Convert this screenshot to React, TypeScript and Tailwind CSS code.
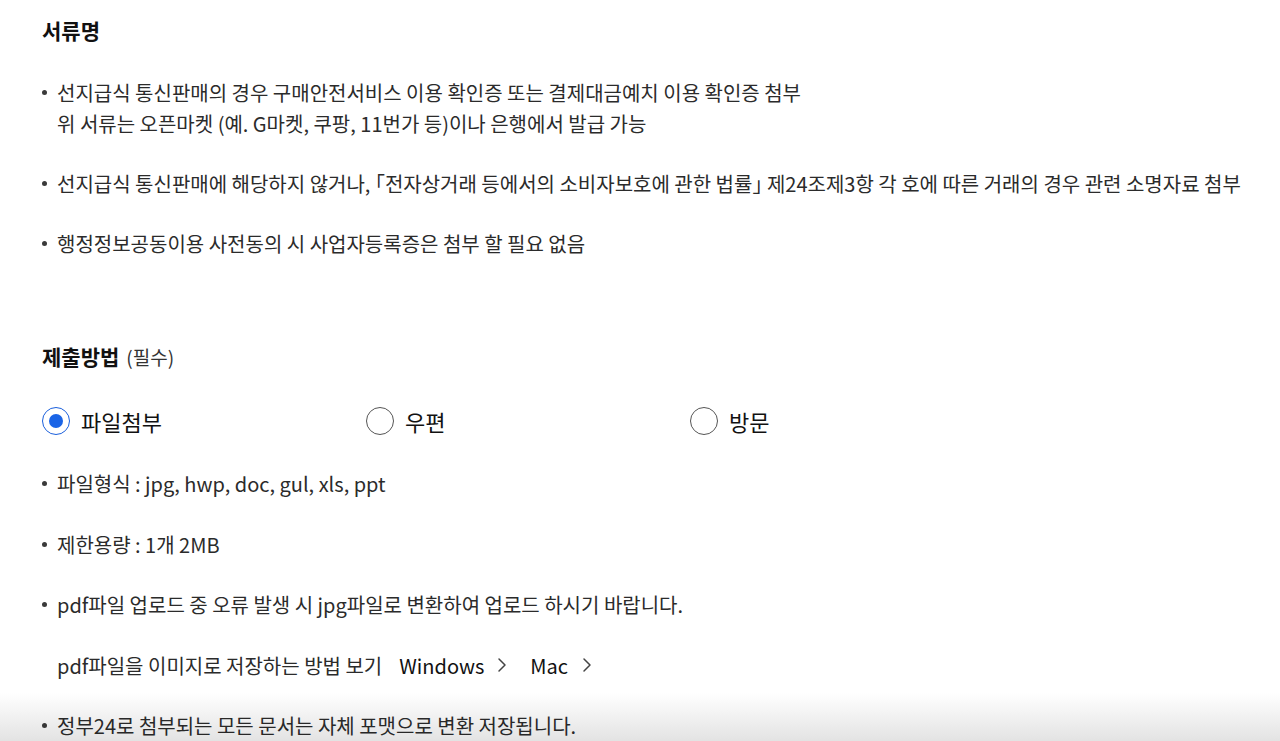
const font = { fontFamily: '"Noto Sans CJK KR", "Noto Sans", sans-serif' };

const Bullet = ({ children }: { children: React.ReactNode }) => (
    <li className="flex">
        <span className="w-[15px] shrink-0 flex pt-[13px]">
            <span className="block h-[5px] w-[5px] rounded-full bg-[#3a3a3a]"></span>
        </span>
        <div>{children}</div>
    </li>
);

const Chevron = () => (
    <svg width="10" height="16" viewBox="0 0 10 16" fill="none" stroke="#444" strokeWidth="1.5" strokeLinecap="round" strokeLinejoin="round">
        <polyline points="2,2 8,8 2,14" />
    </svg>
);

const Radio = ({ label, checked }: { label: string; checked?: boolean }) => (
    <label className="flex items-center gap-[11px] w-[324px]">
        {checked ? (
            <span className="flex h-[28px] w-[28px] items-center justify-center rounded-full border-[1.5px] border-[#1a5fdc]">
                <span className="h-[14px] w-[14px] rounded-full bg-[#1a64e6]"></span>
            </span>
        ) : (
            <span className="h-[28px] w-[28px] rounded-full border border-[#555]"></span>
        )}
        <span className="text-[22px] leading-[28px] text-[#111]">{label}</span>
    </label>
);

const App = () => {
    return (
        <div className="min-h-screen bg-white pl-[42px] pr-[30px] pt-[15px] text-[20px] text-[#2b2b2b] [font-feature-settings:'halt']" style={font}>
            <h2 className="text-[21px] font-bold leading-[30px] text-[#111]">서류명</h2>

            <ul className="mt-[32px] flex flex-col gap-[29px] leading-[31px]">
                <Bullet>
                    <p>선지급식 통신판매의 경우 구매안전서비스 이용 확인증 또는 결제대금예치 이용 확인증 첨부</p>
                    <p>위 서류는 오픈마켓 (예. G마켓, 쿠팡, 11번가 등)이나 은행에서 발급 가능</p>
                </Bullet>
                <Bullet>
                    <p className="whitespace-nowrap">선지급식 통신판매에 해당하지 않거나, 「전자상거래 등에서의 소비자보호에 관한 법률」 제24조제3항 각 호에 따른 거래의 경우 관련 소명자료 첨부</p>
                </Bullet>
                <Bullet>
                    <p>행정정보공동이용 사전동의 시 사업자등록증은 첨부 할 필요 없음</p>
                </Bullet>
            </ul>

            <h2 className="mt-[82px] text-[21px] font-bold leading-[30px] text-[#111]">
                제출방법<span className="ml-[7px] text-[19px] font-normal text-[#333]">(필수)</span>
            </h2>

            <div className="mt-[35px] flex">
                <Radio label="파일첨부" checked />
                <Radio label="우편" />
                <Radio label="방문" />
            </div>

            <ul className="mt-[33px] flex flex-col gap-[29.5px] leading-[31px]">
                <Bullet>
                    <p>파일형식 : jpg, hwp, doc, gul, xls, ppt</p>
                </Bullet>
                <Bullet>
                    <p>제한용량 : 1개 2MB</p>
                </Bullet>
                <Bullet>
                    <p>pdf파일 업로드 중 오류 발생 시 jpg파일로 변환하여 업로드 하시기 바랍니다.</p>
                </Bullet>
                <li className="flex items-center pl-[15px]">
                    <span>pdf파일을 이미지로 저장하는 방법 보기</span>
                    <a className="ml-[17px] flex items-center gap-[13px] text-[#111]" href="#">
                        Windows <Chevron />
                    </a>
                    <a className="ml-[23px] flex items-center gap-[14px] text-[#111]" href="#">
                        Mac <Chevron />
                    </a>
                </li>
                <Bullet>
                    <p>정부24로 첨부되는 모든 문서는 자체 포맷으로 변환 저장됩니다.</p>
                </Bullet>
            </ul>

            <div className="pointer-events-none fixed inset-x-0 bottom-0 h-[48px] bg-linear-to-b from-white to-[#e3e3e3] mix-blend-multiply"></div>
        </div>
    );
};

export default App;
